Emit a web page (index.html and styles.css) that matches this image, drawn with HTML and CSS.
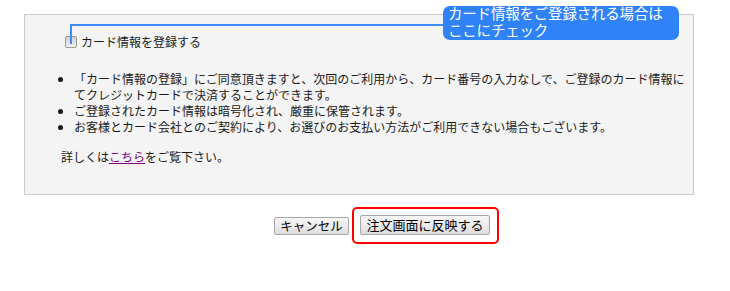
FILE: index.html
```html
<!DOCTYPE html>
<html lang="ja">
<head>
    <meta charset="UTF-8">
    <title>カード情報の登録</title>
    <link rel="stylesheet" href="styles.css">
</head>
<body>

<div class="page">
    <div class="card-box">
        <label class="register">
            <input type="checkbox" class="check">
            <span>カード情報を登録する</span>
        </label>

        <ul class="notes">
            <li>「カード情報の登録」にご同意頂きますと、次回のご利用から、カード番号の入力なしで、ご登録のカード情報に<br>てクレジットカードで決済することができます。</li>
            <li>ご登録されたカード情報は暗号化され、厳重に保管されます。</li>
            <li>お客様とカード会社とのご契約により、お選びのお支払い方法がご利用できない場合もございます。</li>
        </ul>

        <p class="more">詳しくは<a href="#">こちら</a>をご覧下さい。</p>
    </div>

    <div class="actions">
        <button class="btn cancel">キャンセル</button>
        <span class="highlight">
            <button class="btn apply">注文画面に反映する</button>
        </span>
    </div>

    <!-- annotation -->
    <div class="connector"></div>
    <div class="bubble">カード情報をご登録される場合は<br>ここにチェック</div>
</div>

</body>
</html>
```

FILE: styles.css
```css
body {
    margin: 0;
    background: #fff;
    color: #1a1a1a;
    font-family: "Noto Sans CJK JP", "Noto Sans", sans-serif;
    font-size: 12px;
}

.page {
    position: relative;
    width: 730px;
    height: 291px;
    padding-top: 14px;
    box-sizing: border-box;
}

.card-box {
    margin-left: 24px;
    width: 670px;
    box-sizing: border-box;
    padding: 19px 10px 29px 36px;
    background: #f4f4f4;
    border: 1px solid #cbcbcb;
}

.register {
    display: flex;
    align-items: center;
    height: 16px;
    line-height: 16px;
}

.check {
    appearance: none;
    -webkit-appearance: none;
    width: 12px;
    height: 12px;
    margin: 0 4px 0 4px;
    border: 1px solid #9a9a9a;
    border-radius: 2px;
    background: linear-gradient(#cfcfcf, #f1f1f1);
    box-sizing: border-box;
}

.notes {
    margin: 21px 0 14px;
    padding-left: 13px;
    line-height: 16px;
    white-space: nowrap;
}

.more {
    margin: 0;
    line-height: 16px;
}

.more a {
    color: #800080;
}

.actions {
    display: flex;
    align-items: center;
    justify-content: center;
    gap: 3px;
    margin-top: 12px;
    padding-left: 43px;
}

.btn {
    height: 19px;
    padding: 0;
    font-family: "Noto Sans CJK JP", "Noto Sans", sans-serif;
    font-size: 13px;
    line-height: 16px;
    white-space: nowrap;
    color: #000;
    background: linear-gradient(#f6f6f6 0%, #ececec 50%, #dcdcdc 100%);
    border: 1px solid #a6a6a6;
    border-radius: 2px;
    box-sizing: border-box;
}

.cancel {
    width: 75px;
    height: 18px;
    font-size: 12.5px;
}

.apply {
    display: block;
    width: 130px;
    height: 20px;
}

.highlight {
    display: block;
    padding: 6px 7px 7px 6px;
    border: 2px solid #f00;
    border-radius: 5px;
}

.connector {
    position: absolute;
    left: 70px;
    top: 24px;
    width: 373px;
    height: 20px;
    border-top: 2px solid #3f8cf6;
    border-left: 2px solid #3f8cf6;
    box-sizing: border-box;
}

.bubble {
    position: absolute;
    left: 443px;
    top: 6px;
    width: 236px;
    height: 34px;
    box-sizing: border-box;
    padding: 0 5px;
    background: #2f82f7;
    color: #fff;
    border-radius: 7px;
    font-family: "Liberation Sans", "Noto Sans CJK JP", sans-serif;
    font-size: 14.5px;
    line-height: 17px;
    letter-spacing: -0.2px;
    white-space: nowrap;
}
```
